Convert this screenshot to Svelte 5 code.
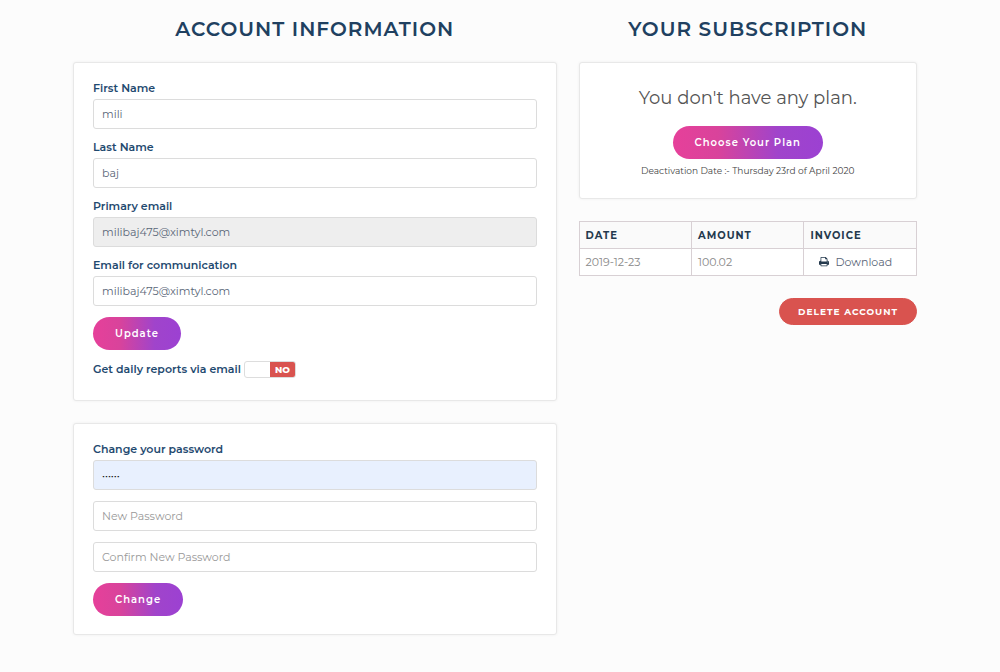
<script lang="ts">
  interface Invoice {
    date: string;
    amount: string;
  }

  let firstName = $state('mili');
  let lastName = $state('baj');
  let email = $state('milibaj475@ximtyl.com');
  let contactEmail = $state('milibaj475@ximtyl.com');
  let dailyReports = $state(false);

  let password = $state('secret');
  let newPassword = $state('');
  let confirmPassword = $state('');

  const invoices: Invoice[] = [{ date: '2019-12-23', amount: '100.02' }];

  const submit = (e: Event) => e.preventDefault();
</script>

<main class="account-page">
  <section class="column">
    <h1>Account Information</h1>

    <form class="card" onsubmit={submit}>
      <label class="label" for="first-name">First Name</label>
      <input class="field" id="first-name" type="text" bind:value={firstName} />

      <label class="label" for="last-name">Last Name</label>
      <input class="field" id="last-name" type="text" bind:value={lastName} />

      <label class="label" for="email">Primary email</label>
      <input class="field" id="email" type="email" value={email} disabled />

      <label class="label" for="contact-email">Email for communication</label>
      <input class="field last" id="contact-email" type="email" bind:value={contactEmail} />

      <button class="btn" type="submit">Update</button>

      <div class="reports">
        <label for="daily-reports">Get daily reports via email</label>
        <span class="toggle" class:on={dailyReports}>
          <input id="daily-reports" type="checkbox" bind:checked={dailyReports} />
          <span class="knob"></span>
          <span class="state">{dailyReports ? 'YES' : 'NO'}</span>
        </span>
      </div>
    </form>

    <form class="card" onsubmit={submit}>
      <label class="label" for="password">Change your password</label>
      <input class="field filled last" id="password" type="password" bind:value={password} />
      <input class="field last" type="password" placeholder="New Password" aria-label="New Password" bind:value={newPassword} />
      <input class="field last" type="password" placeholder="Confirm New Password" aria-label="Confirm New Password" bind:value={confirmPassword} />
      <button class="btn" type="submit">Change</button>
    </form>
  </section>

  <section class="column">
    <h1>Your Subscription</h1>

    <div class="card plan">
      <p class="plan-status">You don't have any plan.</p>
      <button class="btn" type="button">Choose Your Plan</button>
      <p class="deactivation">Deactivation Date :- Thursday 23rd of April 2020</p>
    </div>

    <table class="invoices">
      <thead>
        <tr>
          <th>Date</th>
          <th>Amount</th>
          <th>Invoice</th>
        </tr>
      </thead>
      <tbody>
        {#each invoices as invoice}
          <tr>
            <td>{invoice.date}</td>
            <td>{invoice.amount}</td>
            <td>
              <a class="download" href="#download">
                <svg width="10" height="10" viewBox="0 0 1664 1664" fill="currentColor" aria-hidden="true">
                  <path d="M384 1408h896v-256H384v256zm0-640h896V384h-160q-40 0-68-28t-28-68V128H384v640zm1152 64q0-26-19-45t-45-19-45 19-19 45 19 45 45 19 45-19 19-45zm128 0v416q0 13-9.500 22.500t-22.500 9.500h-224v160q0 40-28 68t-68 28H352q-40 0-68-28t-28-68v-160H32q-13 0-22.500-9.500T0 1248V832q0-79 56.500-135.500T192 640h64V96q0-40 28-68t68-28h672q40 0 88 20t76 48l152 152q28 28 48 76t20 88v256h64q79 0 135.500 56.500T1664 832z" />
                </svg>
                Download
              </a>
            </td>
          </tr>
        {/each}
      </tbody>
    </table>

    <button class="delete-btn" type="button">Delete Account</button>
  </section>
</main>

<style>
  :global(body) {
    margin: 0;
    background: #fcfcfc;
  }

  .account-page {
    display: grid;
    grid-template-columns: 10fr 7fr;
    gap: 22px;
    padding: 14px 83px 36px 73px;
    font-family: Montserrat, Inter, sans-serif;
    font-size: 11px;
    color: #555;
  }

  .account-page * {
    box-sizing: border-box;
  }

  .column {
    display: flex;
    flex-direction: column;
    gap: 22px;
    min-width: 0;
  }

  h1 {
    margin: 0 0 -4px;
    font-size: 20px;
    line-height: 30px;
    font-weight: 600;
    letter-spacing: 1px;
    text-align: center;
    text-transform: uppercase;
    color: #204060;
  }

  .card {
    padding: 16px 19px 18px;
    background: #fff;
    border: 1px solid #e8e8e8;
    border-radius: 3px;
    box-shadow: 0 0 3px rgba(0, 0, 0, 0.06);
  }

  .label,
  .reports label {
    line-height: 18px;
    font-weight: 600;
    color: #1f4a70;
  }

  .label {
    display: block;
    margin-bottom: 2px;
  }

  .field {
    display: block;
    width: 100%;
    height: 30px;
    margin: 0 0 9px;
    padding: 0 8px;
    border: 1px solid #dcdcdc;
    border-radius: 3px;
    background: #fff;
    color: #5a6678;
    font-family: inherit;
    font-size: 11px;
  }

  .field.last {
    margin-bottom: 11px;
  }

  .field:disabled {
    background: #eee;
  }

  .field.filled {
    background: #e8f0fe;
    color: #111;
    font-size: 10px;
  }

  .field::placeholder {
    color: #999;
  }

  .btn {
    display: block;
    height: 33px;
    padding: 0 22px;
    border: none;
    border-radius: 17px;
    background: linear-gradient(90deg, #e6409a 0%, #d9439b 30%, #a044cb 70%, #9c41d2 100%);
    color: #fff;
    font-family: inherit;
    font-size: 10px;
    font-weight: 600;
    letter-spacing: 1px;
    cursor: pointer;
  }

  .reports {
    display: flex;
    align-items: center;
    gap: 3px;
    margin: 10px 0 4px;
  }

  .toggle {
    position: relative;
    display: flex;
    width: 52px;
    height: 17px;
    border: 1px solid #ddd;
    border-radius: 3px;
    overflow: hidden;
    line-height: 15px;
  }

  /* The native checkbox covers the switch and takes the clicks */
  .toggle input {
    position: absolute;
    inset: 0;
    width: 100%;
    height: 100%;
    margin: 0;
    opacity: 0;
    cursor: pointer;
  }

  .toggle.on {
    flex-direction: row-reverse;
  }

  .knob,
  .state {
    flex: 1;
  }

  .state {
    background: #d9534f;
    color: #fff;
    font-size: 9px;
    font-weight: 800;
    text-align: center;
  }

  .toggle.on .state {
    background: #5cb85c;
  }

  .plan {
    display: flex;
    flex-direction: column;
    align-items: center;
    padding: 22px 19px 15px;
  }

  .plan p {
    margin: 0;
  }

  .plan .plan-status {
    margin-bottom: 15px;
    font-size: 18px;
    line-height: 26px;
  }

  .deactivation {
    font-size: 9px;
    line-height: 24px;
    color: #444;
  }

  .invoices {
    width: 100%;
    table-layout: fixed;
    border-collapse: collapse;
    background: #fff;
  }

  .invoices th,
  .invoices td {
    height: 27px;
    padding: 0 6px;
    border: 1px solid #d8d0d4;
    text-align: left;
  }

  .invoices th {
    background: #fafafa;
    font-size: 10px;
    font-weight: 700;
    letter-spacing: 1px;
    text-transform: uppercase;
    color: #24394d;
  }

  .invoices td {
    color: #888;
  }

  .download {
    display: flex;
    align-items: center;
    gap: 6px;
    padding-left: 9px;
    color: #5a6678;
    text-decoration: none;
  }

  .download svg {
    color: #24394d;
  }

  .delete-btn {
    align-self: flex-end;
    height: 27px;
    padding: 0 18px;
    border: 1px solid #d9534f;
    border-radius: 14px;
    background: #d9534f;
    color: #fff;
    font-family: inherit;
    font-size: 9px;
    font-weight: 700;
    letter-spacing: 1px;
    text-transform: uppercase;
    cursor: pointer;
  }
</style>
